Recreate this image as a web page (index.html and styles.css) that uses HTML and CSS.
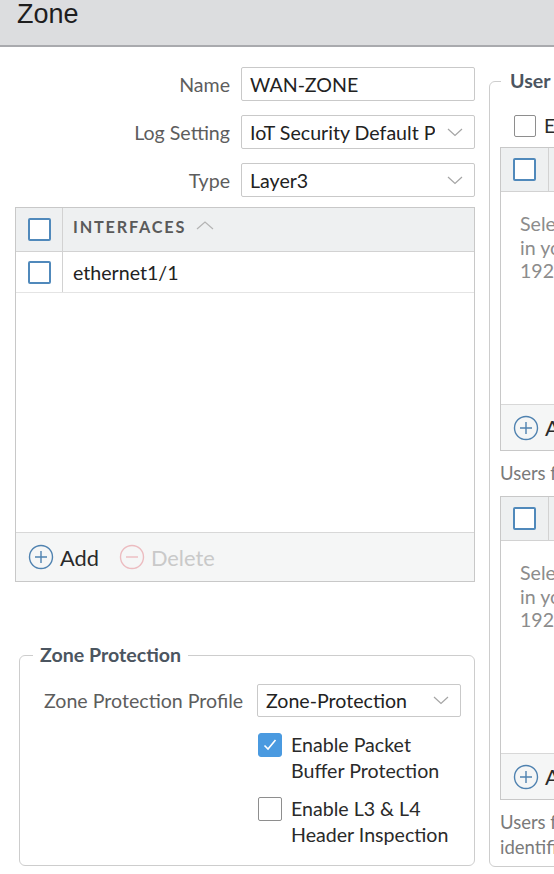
FILE: index.html
```html
<!DOCTYPE html>
<html>
<head>
<meta charset="utf-8">
<link rel="stylesheet" href="styles.css">
</head>
<body>
<div class="hdr"><h1>Zone</h1></div>
<div class="main">
  <div class="left">
    <div class="row">
      <label>Name</label>
      <div class="field"><span class="val">WAN-ZONE</span></div>
    </div>
    <div class="row">
      <label>Log Setting</label>
      <div class="field"><span class="val clip">IoT Security Default Profile</span>
        <svg class="chev" width="16" height="9" viewBox="0 0 16 9"><path d="M1 1l7 6.5L15 1" fill="none" stroke="#a5a5a5" stroke-width="1.2"/></svg></div>
    </div>
    <div class="row last">
      <label>Type</label>
      <div class="field"><span class="val">Layer3</span>
        <svg class="chev" width="16" height="9" viewBox="0 0 16 9"><path d="M1 1l7 6.5L15 1" fill="none" stroke="#a5a5a5" stroke-width="1.2"/></svg></div>
    </div>

    <div class="tbl">
      <div class="thead">
        <div class="cbcell"><span class="cb"></span></div>
        <div class="th">INTERFACES
          <svg class="caret" width="18" height="10" viewBox="0 0 18 10"><path d="M1 9l8-7 8 7" fill="none" stroke="#b4b4b4" stroke-width="1.2"/></svg></div>
      </div>
      <div class="trow">
        <div class="cbcell"><span class="cb"></span></div>
        <div class="td">ethernet1/1</div>
      </div>
      <div class="tbody"></div>
      <div class="tfoot">
        <span class="act">
          <svg width="26" height="26" viewBox="0 0 26 26"><circle cx="13" cy="13" r="11.5" fill="none" stroke="#4f82b0" stroke-width="1.4"/><path d="M13 7v12M7 13h12" stroke="#4f82b0" stroke-width="1.4"/></svg>
          <span>Add</span></span>
        <span class="act dis">
          <svg width="26" height="26" viewBox="0 0 26 26"><circle cx="13" cy="13" r="11.5" fill="none" stroke="#ecbcc0" stroke-width="1.4"/><path d="M7 13h12" stroke="#ecbcc0" stroke-width="1.4"/></svg>
          <span>Delete</span></span>
      </div>
    </div>

    <fieldset class="zp">
      <legend>Zone Protection</legend>
      <div class="zin">
        <div class="zrow">
          <label>Zone Protection Profile</label>
          <div class="field zsel"><span class="val">Zone-Protection</span>
            <svg class="chev" width="16" height="9" viewBox="0 0 16 9"><path d="M1 1l7 6.5L15 1" fill="none" stroke="#a5a5a5" stroke-width="1.2"/></svg></div>
        </div>
        <div class="checks">
          <div class="chk">
            <span class="box on"><svg width="24" height="24" viewBox="0 0 24 24"><path d="M6.5 12.5l3.5 3.5 7.5-9" fill="none" stroke="#fff" stroke-width="1.6"/></svg></span>
            <span class="ctext">Enable Packet<br>Buffer Protection</span>
          </div>
          <div class="chk">
            <span class="box"></span>
            <span class="ctext">Enable L3 &amp; L4<br>Header Inspection</span>
          </div>
        </div>
      </div>
    </fieldset>
  </div>

  <div class="right">
    <fieldset class="uid">
      <legend>User Identification ACL</legend>
      <div class="uchk"><span class="box sm"></span><span class="ctext">Enable User Identification</span></div>
      <div class="tbl2">
        <div class="thead">
          <div class="cbcell2"><span class="cb"></span></div>
          <div class="th">INCLUDE LIST</div>
        </div>
        <div class="hint">Select an address or address group, or type<br>in your own address. Ex: 192.168.1.20 or<br>192.168.1.0/24</div>
        <div class="tfoot2">
          <span class="act">
            <svg width="26" height="26" viewBox="0 0 26 26"><circle cx="13" cy="13" r="11.5" fill="none" stroke="#4f82b0" stroke-width="1.4"/><path d="M13 7v12M7 13h12" stroke="#4f82b0" stroke-width="1.4"/></svg>
            <span>Add</span></span>
        </div>
      </div>
      <div class="note n1">Users from these addresses/subnets will be identified.</div>
      <div class="tbl2">
        <div class="thead">
          <div class="cbcell2"><span class="cb"></span></div>
          <div class="th">EXCLUDE LIST</div>
        </div>
        <div class="hint">Select an address or address group, or type<br>in your own address. Ex: 192.168.1.20 or<br>192.168.1.0/24</div>
        <div class="tfoot2">
          <span class="act">
            <svg width="26" height="26" viewBox="0 0 26 26"><circle cx="13" cy="13" r="11.5" fill="none" stroke="#4f82b0" stroke-width="1.4"/><path d="M13 7v12M7 13h12" stroke="#4f82b0" stroke-width="1.4"/></svg>
            <span>Add</span></span>
        </div>
      </div>
      <div class="note n2">Users from these addresses/subnets will not be<br>identified.</div>
    </fieldset>
  </div>
</div>
</body>
</html>
```
FILE: styles.css
```css
* { box-sizing: border-box; }
html, body { margin: 0; padding: 0; }
body {
  width: 554px;
  height: 874px;
  overflow: hidden;
  background: #fff;
  font-family: Lato, "Open Sans", sans-serif;
  color: #333;
  font-size: 19.6px;
}
.hdr {
  height: 47px;
  background: #dcdddf;
  border-bottom: 2px solid #a9aaae;
  padding-left: 17px;
}
.hdr h1 {
  margin: 0;
  font-family: "Liberation Sans", Arial, sans-serif;
  font-weight: normal;
  font-size: 27px;
  line-height: 28px;
  color: #1e1e1e;
}
.main {
  display: flex;
  align-items: flex-start;
}
.left {
  flex: none;
  width: 460px;
  margin-left: 15px;
  padding-top: 20px;
}
.row {
  display: flex;
  align-items: center;
  gap: 11px;
  margin-bottom: 14px;
}
.row.last { margin-bottom: 10px; }
.row label {
  width: 215px;
  text-align: right;
  color: #5d5d5d;
  font-size: 19.6px;
}
.field {
  width: 234px;
  height: 34px;
  border: 1px solid #c9c9c9;
  border-radius: 2px;
  display: flex;
  align-items: center;
  justify-content: space-between;
  padding: 0 11px 0 8px;
  font-size: 19.6px;
  color: #222;
  background: #fff;
}
.val { white-space: nowrap; }
.clip {
  width: 185px;
  overflow: hidden;
}
.chev { flex: none; }

.tbl {
  height: 375px;
  border: 1px solid #c8c8c8;
  display: flex;
  flex-direction: column;
}
.thead {
  height: 44px;
  flex: none;
  background: #eef0f1;
  border-bottom: 1px solid #d2d2d2;
  display: flex;
}
.cbcell {
  width: 47px;
  flex: none;
  border-right: 1px solid #d2d2d2;
  display: flex;
  align-items: center;
  justify-content: center;
}
.cb {
  width: 23px;
  height: 23px;
  border: 2px solid #5089bb;
  border-radius: 2px;
  background: #fff;
  display: block;
}
.th {
  display: flex;
  align-items: center;
  padding-left: 10px;
  padding-bottom: 7px;
  font-size: 16.3px;
  font-weight: bold;
  letter-spacing: 1.8px;
  color: #5a5a5a;
  white-space: nowrap;
}
.caret { margin-left: 10px; margin-top: -2px; }
.trow {
  height: 41px;
  flex: none;
  display: flex;
  border-bottom: 1px solid #e4e4e4;
}
.td {
  display: flex;
  align-items: center;
  padding-left: 10px;
  font-size: 19.6px;
  color: #222;
}
.tbody { flex: 1; }
.tfoot {
  height: 49px;
  flex: none;
  background: #f5f6f6;
  border-top: 1px solid #d8d8d8;
  display: flex;
  align-items: center;
  padding-left: 12px;
  gap: 20px;
}
.act {
  display: flex;
  align-items: center;
  gap: 6px;
  font-size: 21.8px;
  color: #2a2a2a;
}
.act.dis { color: #c9c9c9; }

.zp {
  margin: 62px 0 0 4px;
  width: 456px;
  border: 1px solid #cdcdcd;
  border-radius: 6px;
  padding: 0 13px 17px 13px;
}
.zp legend {
  padding: 0 7px;
  font-size: 19.6px;
  line-height: 22px;
  font-weight: bold;
  color: #4b5560;
}
.zin {
  padding-left: 11px;
  padding-top: 18px;
}
.zrow {
  display: flex;
  align-items: center;
  gap: 11px;
}
.zrow label {
  width: 202px;
  flex: none;
  color: #5d5d5d;
  font-size: 19.6px;
  white-space: nowrap;
}
.zsel {
  width: 204px;
  height: 33px;
}
.checks {
  margin-left: 214px;
  margin-top: 15px;
  display: flex;
  flex-direction: column;
  gap: 12px;
}
.chk {
  display: flex;
  align-items: flex-start;
  gap: 9px;
}
.box {
  width: 24px;
  height: 24px;
  flex: none;
  border: 1.5px solid #8e8e8e;
  border-radius: 2px;
  background: #fff;
  display: block;
  margin-top: 1px;
}
.box.on {
  background: #4a9ae0;
  border-color: #4a9ae0;
  border-radius: 3px;
}
.box.on svg { display: block; margin: -1.5px; }
.ctext {
  font-size: 19.6px;
  line-height: 26px;
  color: #2a2a2a;
  white-space: nowrap;
}

.right {
  flex: none;
  margin-left: 14px;
  width: 440px;
  padding-top: 23px;
}
.uid {
  margin: 0;
  border: 1px solid #cdcdcd;
  border-radius: 6px;
  padding: 23px 0 6px 11px;
}
.uid legend {
  padding: 0 9px;
  font-size: 19.6px;
  line-height: 22px;
  font-weight: bold;
  color: #4b5560;
  white-space: nowrap;
}
.uchk {
  display: flex;
  align-items: center;
  gap: 8px;
  margin-left: 13px;
}
.box.sm {
  width: 22px;
  height: 22px;
  margin-top: 0;
}
.uchk .ctext { line-height: 22px; }
.tbl2 {
  margin-top: 10px;
  margin-left: -1px;
  height: 304px;
  border: 1px solid #c8c8c8;
  display: flex;
  flex-direction: column;
}
.cbcell2 {
  width: 48px;
  flex: none;
  border-right: 1px solid #d2d2d2;
  display: flex;
  align-items: center;
  justify-content: center;
}
.hint {
  flex: 1;
  padding: 20px 0 0 19px;
  font-size: 19.6px;
  line-height: 23.5px;
  color: #8c8c8c;
  white-space: nowrap;
}
.tfoot2 {
  height: 46px;
  flex: none;
  background: #f5f6f6;
  border-top: 1px solid #d8d8d8;
  display: flex;
  align-items: center;
  padding-left: 12px;
}
.note {
  font-size: 18.5px;
  color: #7a7a7a;
  white-space: nowrap;
  margin-left: -1px;
}
.n1 {
  line-height: 23px;
  margin-top: 11px;
  margin-bottom: 11px;
}
.n1 + .tbl2 { margin-top: 0; }
.n2 {
  line-height: 25px;
  margin-top: 10px;
}
```
